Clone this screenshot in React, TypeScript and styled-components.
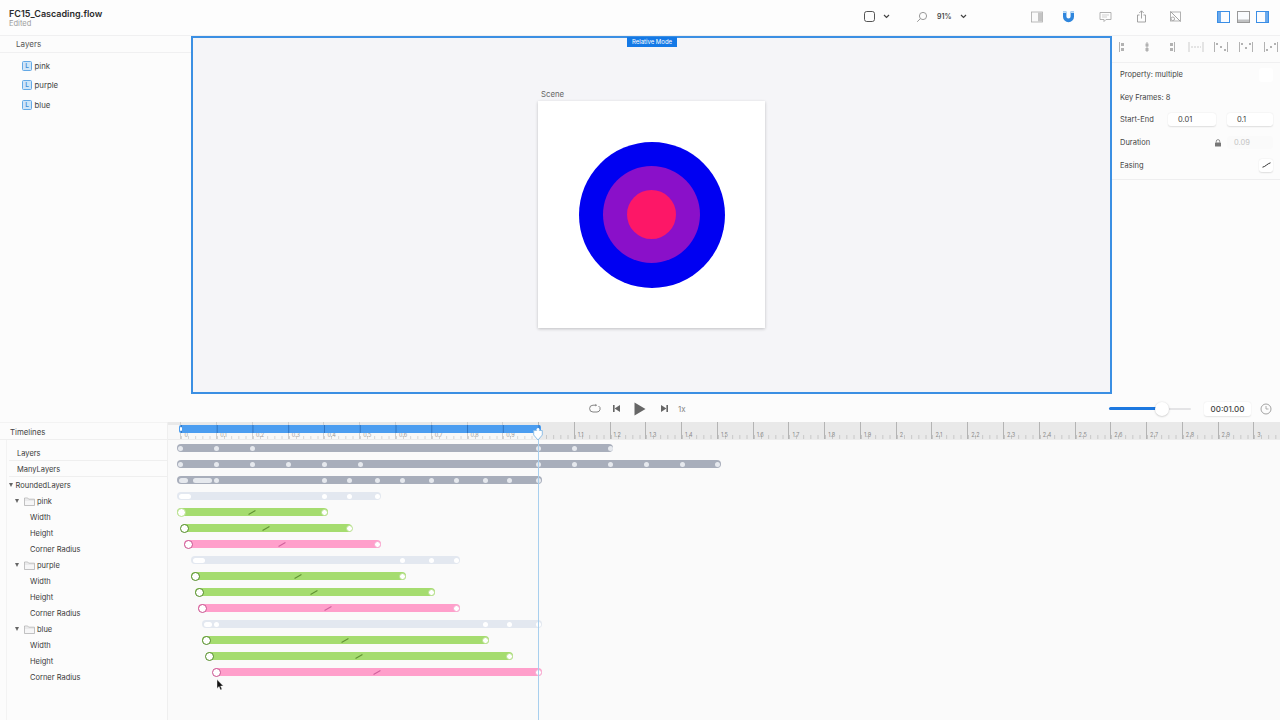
import React from "react";
import styled, { createGlobalStyle } from "styled-components";

const Global = createGlobalStyle`
  html, body { margin: 0; padding: 0; background: #fcfcfc; }
  #root { width: 1280px; height: 720px; overflow: hidden; }
  * { box-sizing: border-box; }
`;

const Root = styled.div`
  width: 1280px; height: 720px; display: flex; flex-direction: column; overflow: hidden;
  background: #fcfcfc; color: #333; font-family: Inter, "Liberation Sans", sans-serif; font-size: 7.5px; position: relative;
`;

/* header */
const Header = styled.header`
  height: 36px; flex: none; display: flex; align-items: center; padding-left: 9px;
  border-bottom: 1px solid #f0f0f1; background: #fdfdfd;
`;
const TitleBlock = styled.div`width: 853px; flex: none; display: flex; flex-direction: column;`;
const Title = styled.div`font-size: 9px; font-weight: 600; color: #2b2b2b; line-height: 11px;`;
const Subtitle = styled.div`font-size: 7.5px; color: #9c9c9c; line-height: 9px;`;
const Tool = styled.div<{ $ml?: number }>`
  width: 14px; height: 14px; flex: none; margin-left: ${p => p.$ml ?? 0}px; margin-bottom: 2px;
  display: flex; align-items: center; justify-content: center;
`;
const ZoomValue = styled.span<{ $ml: number }>`
  width: 15px; margin-left: ${p => p.$ml}px; font-size: 7px; font-weight: 600; color: #444; margin-bottom: 2px;
`;

/* workspace */
const Workspace = styled.div`height: 359px; flex: none; display: flex; align-items: flex-start;`;
const LayersPanel = styled.aside`width: 191px; flex: none; align-self: stretch; background: #fcfcfc;`;
const PanelTitle = styled.div`
  height: 17px; display: flex; align-items: center; padding-left: 16px; color: #555; font-size: 8px; border-bottom: 1px solid #f0f0f1;
`;
const LayerList = styled.div`padding-top: 3px;`;
const LayerRow = styled.div`height: 19.5px; display: flex; align-items: center; gap: 2.5px; padding-left: 22px; color: #444; font-size: 7.8px;`;
const LayerBadge = styled.span`
  width: 10px; height: 10px; border-radius: 1.5px; background: #cfe5f8; border: 1px solid #64a9e6;
  color: #3f8fd8; font-size: 6.5px; font-weight: 600; line-height: 8px; text-align: center;
`;
const Canvas = styled.main`
  width: 921px; height: 358px; flex: none; position: relative; display: flex; align-items: center; justify-content: center;
  background: #f5f5f8; border: 2px solid #3b8fe3;
`;
const ModeBadge = styled.div`
  position: absolute; top: -1px; left: 434px; width: 50px; height: 10px; background: #1479e6; color: #fff;
  font-size: 6px; line-height: 10px; text-align: center;
`;
const Scene = styled.div`
  width: 227px; height: 227px; margin-bottom: 1px; position: relative; background: #fff; box-shadow: 0 1px 3px rgba(0,0,0,.22);
  display: flex; align-items: center; justify-content: center;
`;
const SceneLabel = styled.div`position: absolute; left: 3px; top: -12px; color: #666; line-height: 10px; font-size: 7.8px;`;
const Disc = styled.div<{ $size: number; $color: string }>`
  width: ${p => p.$size}px; height: ${p => p.$size}px; border-radius: 50%; background: ${p => p.$color};
  display: flex; align-items: center; justify-content: center;
`;

/* inspector */
const Inspector = styled.aside`width: 168px; flex: none; align-self: stretch; background: #fcfcfc;`;
const AlignBar = styled.div`
  height: 27px; display: flex; align-items: center; justify-content: space-between; padding: 0 1px 4px 2px;
  border-bottom: 1px solid #f0f0f1;
`;
const AlignSlot = styled.div`width: 16px; height: 14px; display: flex; align-items: center; justify-content: center;`;
const PropGroup = styled.div`padding: .5px 7px 2.5px 8px; border-bottom: 1px solid #eeeeef;`;
const PropRow = styled.div`height: 22.6px; display: flex; align-items: center; color: #444;`;
const PropLabel = styled.span`flex: 1;`;
const Swatch = styled.span`width: 14px; height: 14px; border-radius: 3px; background: #fff;`;
const Field = styled.span<{ $w: number; $ml?: number; $off?: boolean }>`
  width: ${p => p.$w}px; height: 13px; margin-left: ${p => p.$ml ?? 0}px; border-radius: 3px; padding-left: ${p => p.$off ? 7 : 10}px;
  background: ${p => p.$off ? "#fafafa" : "#fff"}; color: ${p => p.$off ? "#c4c4c4" : "#444"}; line-height: 13px;
  box-shadow: ${p => p.$off ? "none" : "0 .5px 1.5px rgba(0,0,0,.12)"};
`;
const LockSlot = styled.span`width: 8px; height: 8px; margin-right: 5px; display: flex;`;
const EaseButton = styled.span`
  width: 14px; height: 13px; border-radius: 3px; background: #fff; display: flex; align-items: center; justify-content: center;
  box-shadow: 0 .5px 1.5px rgba(0,0,0,.12);
`;

/* transport */
const Transport = styled.div`height: 27px; flex: none; display: flex; align-items: center; padding: 0 8px 0 588px; background: #fcfcfc;`;
const Controls = styled.div`display: flex; align-items: center;`;
const CtrlSlot = styled.div<{ $ml?: number }>`
  width: 14px; height: 16px; margin-left: ${p => p.$ml ?? 0}px; display: flex; align-items: center; justify-content: center;
`;
const Speed = styled.span`color: #888; margin-left: 7px; font-size: 8px;`;
const RightGroup = styled.div`margin-left: auto; display: flex; align-items: center;`;
const Slider = styled.div`width: 82px; height: 2px; background: #e4e4e6; position: relative; border-radius: 1px; margin-right: 13px;`;
const SliderFill = styled.div`position: absolute; left: 0; top: -.5px; height: 3px; width: 50px; border-radius: 2px; background: #1d78e0;`;
const SliderKnob = styled.div`
  position: absolute; left: 46px; top: -6px; width: 14px; height: 14px; border-radius: 50%; background: #fff;
  box-shadow: 0 .5px 2px rgba(0,0,0,.25);
`;
const TimeBox = styled.div`
  width: 47px; height: 14px; border-radius: 3px; background: #fff; box-shadow: 0 .5px 1.5px rgba(0,0,0,.1);
  font-size: 8px; font-weight: 500; color: #444; text-align: center; line-height: 14px; margin-right: 9px;
`;

/* timeline */
const Timeline = styled.section`flex: 1; display: flex; position: relative; min-height: 0;`;
const Sidebar = styled.div`width: 168px; flex: none; border-right: 1px solid #efefef; background: #fcfcfc; display: flex; flex-direction: column;`;
const SideHead = styled.div`
  height: 18px; flex: none; border-bottom: 1px solid #efefef; border-top: 1px solid #f3f3f3; padding: 1px 0 0 10px; display: flex; align-items: center; color: #444; font-size: 7.8px;
`;
const SideBody = styled.div`flex: 1; margin-left: 6px; border-left: 1px solid #f3f3f3; padding-top: 5px;`;
const SideRow = styled.div<{ $indent: number; $line?: boolean }>`
  height: 16px; display: flex; align-items: center; padding-left: ${p => p.$indent}px; color: #3a3a3a;
  padding-top: ${p => p.$line ? 1 : 0}px;
  border-bottom: ${p => p.$line ? "1px solid #efefef" : "none"}; margin-left: ${p => p.$line ? 2 : 0}px;
`;
const Caret = styled.span<{ $ml: number }>`
  width: 0; height: 0; margin-left: ${p => p.$ml}px; border-left: 2.5px solid transparent; border-right: 2.5px solid transparent;
  border-top: 4px solid #666; margin-right: 2.5px;
`;
const FolderSlot = styled.span`width: 11px; height: 9px; display: flex; margin: 0 2px 0 2.5px;`;
const Tracks = styled.div`flex: 1; min-width: 0; background: #fafafa; display: flex; flex-direction: column; position: relative; overflow: hidden;`;
const Ruler = styled.div`height: 18px; flex: none; display: flex; position: relative; background: #e9e9e9; overflow: hidden; border-bottom: 1px solid #ececec;`;
const RulerLead = styled.div`width: 12.4px; flex: none; background: linear-gradient(#e9e9e9 3px, #f8f8f8 3px);`;
const RulerCell = styled.div<{ $past: boolean }>`
  width: 35.78px; flex: none; height: 100%; padding: 10px 0 0 3px; font-size: 5.5px; line-height: 7px;
  color: ${p => p.$past ? "#9a9a9a" : "#8a8a8a"};
  border-left: .6px solid ${p => p.$past ? "#cfcfcf" : "#b4b4b4"};
  background: ${p => p.$past
    ? "linear-gradient(to right, #d2d2d2 .6px, transparent .6px) left bottom / 7.156px 3.5px repeat-x, linear-gradient(#e9e9e9 3px, #f8f8f8 3px)"
    : "linear-gradient(to right, #c4c4c4 .6px, transparent .6px) left bottom / 7.156px 4px repeat-x, #e9e9e9"};
`;
const WorkArea = styled.div`
  position: absolute; left: 10.5px; top: 3px; width: 362px; height: 7.5px; border-radius: 2px; overflow: hidden; background: #4b9df0;
`;
const WorkTicks = styled.div`
  position: absolute; inset: 0; 
  background: linear-gradient(to right, #2f74c2 .7px, transparent .7px) 37.68px 0 / 35.78px 100% repeat-x;
`;
const WorkHandle = styled.div`position: absolute; left: 1.5px; top: 1.5px; width: 2px; height: 4.5px; border-radius: 1px; background: #fff;`;
const TrackList = styled.div`flex: 1;`;
const TrackRow = styled.div`height: 16px; display: flex; align-items: center;`;
const Bar = styled.div<{ $left: number; $w: number; $color: string }>`
  height: 8px; border-radius: 4px; position: relative; flex: none;
  margin-left: ${p => p.$left}px; width: ${p => p.$w}px; background: ${p => p.$color};
`;
const Dot = styled.span<{ $x: number; $color: string }>`
  position: absolute; top: 1.5px; left: ${p => p.$x - 2.5}px; width: 5px; height: 5px; border-radius: 50%; background: ${p => p.$color};
`;
const Blob = styled.span<{ $x: number; $w: number; $color: string }>`
  position: absolute; top: 1.5px; left: ${p => p.$x}px; width: ${p => p.$w}px; height: 5px; border-radius: 2.5px; background: ${p => p.$color};
`;
const Ring = styled.span<{ $x: number; $border: string }>`
  position: absolute; top: -.5px; left: ${p => p.$x - 4.5}px; width: 9px; height: 9px; border-radius: 50%; background: #fff;
  border: 1.5px solid ${p => p.$border};
`;
const EndDot = styled.span<{ $x: number; $border: string }>`
  position: absolute; top: .5px; left: ${p => p.$x - 3.5}px; width: 7px; height: 7px; border-radius: 50%; background: #fff;
  border: 1px solid ${p => p.$border};
`;
const Ease = styled.span<{ $x: number; $color: string }>`
  position: absolute; top: 3.5px; left: ${p => p.$x - 4}px; width: 8px; height: 1px; background: ${p => p.$color}; transform: rotate(-30deg);
`;
const PlayLine = styled.div`position: absolute; left: 369.5px; top: 6px; bottom: 0; width: 1px; background: #a8cfee;`;
const PlayHead = styled.svg`position: absolute; left: 365px; top: 5px; width: 10px; height: 14px;`;
const Pointer = styled.svg`position: absolute; left: 47.5px; top: 257px; width: 8px; height: 12px;`;

/* icons */
const ChevronDown = () => <svg width="7" height="5" viewBox="0 0 7 5"><path d="M1 1l2.500 2.500L6 1" fill="none" stroke="#444" strokeWidth="1.200" /></svg>;
const ShapeIcon = () => <svg width="13" height="13" viewBox="0 0 13 13"><rect x="1.500" y="1.500" width="10" height="10" rx="2.200" fill="none" stroke="#555" strokeWidth="1" /></svg>;
const SearchIcon = () => <svg width="12" height="12" viewBox="0 0 12 12"><circle cx="7" cy="5" r="3.600" fill="none" stroke="#999" /><path d="M4.300 7.700L1.200 10.800" stroke="#999" /></svg>;
const SidePanelIcon = () => <svg width="12" height="12" viewBox="0 0 12 12"><rect x=".5" y="1" width="11" height="10" fill="#fafafa" stroke="#aaa" strokeWidth=".8" /><rect x="7" y="1.500" width="4" height="9" fill="#c4c4c4" /></svg>;
const MagnetIcon = () => <svg width="13" height="13" viewBox="0 0 13 13"><path d="M1 1.500h3.400v5a2.100 2.100 0 0 0 4.200 0v-5H12v5.200a5.500 5.500 0 0 1-11 0z" fill="#2f86dd" /><path d="M1 1.500h3.400v1.600H1zM8.600 1.500H12v1.600H8.600z" fill="#bcdcf7" /></svg>;
const CommentIcon = () => <svg width="13" height="12" viewBox="0 0 13 12"><path d="M1 1.500h11v7H7L5 10.500V8.500H1z" fill="none" stroke="#aaa" strokeWidth=".9" /><path d="M3 4h7M3 6h5" stroke="#bbb" strokeWidth=".7" /></svg>;
const ShareIcon = () => <svg width="11" height="13" viewBox="0 0 11 13"><path d="M3.500 5H1.500v7h8V5h-2" fill="none" stroke="#999" strokeWidth=".9" /><path d="M5.500 8.500V1M3.300 3l2.200-2.200L7.700 3" fill="none" stroke="#999" strokeWidth=".9" /></svg>;
const NoDeviceIcon = () => <svg width="13" height="13" viewBox="0 0 13 13"><rect x="1.500" y="2" width="10" height="9" fill="none" stroke="#aaa" strokeWidth=".9" /><path d="M1.500 1.500l10 10" stroke="#999" strokeWidth=".9" /><circle cx="3.800" cy="8.800" r="1.800" fill="#fafafa" stroke="#999" strokeWidth=".8" /></svg>;
const LayoutIcon = ({ band, color }: { band: "left" | "bottom" | "right"; color: string }) => (
  <svg width="13" height="12" viewBox="0 0 13 12">
    <rect x=".5" y=".5" width="12" height="11" fill="#fafcff" stroke={color} strokeWidth="1" />
    {band === "left" && <rect x="1" y="1" width="3" height="10" fill={color} opacity=".75" />}
    {band === "right" && <rect x="9" y="1" width="3" height="10" fill={color} opacity=".75" />}
    {band === "bottom" && <rect x="1" y="8.500" width="11" height="2.500" fill={color} opacity=".6" />}
  </svg>
);
const AlignIcon = ({ kind }: { kind: number }) => {
  const c = "#b2b2b2";
  if (kind === 0) return <svg width="10" height="12" viewBox="0 0 10 12"><path d="M2.500 1v10" stroke={c} /><rect x="4" y="2" width="3" height="3" fill={c} /><rect x="4" y="7" width="3" height="3" fill={c} /></svg>;
  if (kind === 1) return <svg width="10" height="12" viewBox="0 0 10 12"><path d="M5 1v10" stroke={c} /><rect x="3.500" y="2.500" width="3" height="3" fill={c} /><rect x="3.500" y="7" width="3" height="3" fill={c} /></svg>;
  if (kind === 2) return <svg width="10" height="12" viewBox="0 0 10 12"><path d="M7.500 1v10" stroke={c} /><rect x="3" y="2" width="3" height="3" fill={c} /><rect x="3" y="7" width="3" height="3" fill={c} /></svg>;
  if (kind === 3) return <svg width="16" height="12" viewBox="0 0 16 12"><path d="M1 1v10M15 1v10" stroke="#ccc" /><path d="M3 6h10" stroke="#ccc" strokeDasharray="2 1" /></svg>;
  const pts = kind === 4 ? [[4, 3], [8, 6], [12, 9]] : kind === 5 ? [[4, 3], [8, 7], [12, 3]] : [[4, 9], [8, 6], [12, 3]];
  return (
    <svg width="16" height="12" viewBox="0 0 16 12">
      <path d="M1.500 1v10M14.500 1v10" stroke={c} />
      {pts.map(([x, y], i) => <rect key={i} x={x - 1} y={y - 1} width="2" height="2" fill={c} />)}
    </svg>
  );
};
const LockIcon = () => <svg width="8" height="8" viewBox="0 0 8 8"><rect x="1" y="3.500" width="6" height="4" rx=".6" fill="#777" /><path d="M2.300 3.500V2.300a1.700 1.700 0 0 1 3.400 0v1.200" fill="none" stroke="#777" strokeWidth=".8" /></svg>;
const EaseIcon = () => <svg width="9" height="6" viewBox="0 0 9 6"><path d="M.5 5.200C3 5 5.500 1.500 8.500.8" fill="none" stroke="#333" strokeWidth="1" /></svg>;
const LoopIcon = () => <svg width="12" height="11" viewBox="0 0 12 11"><path d="M7 2.200H4a3.200 3.200 0 0 0 0 6.800h4a3.200 3.200 0 0 0 1.500-6" fill="none" stroke="#777" strokeWidth=".9" /><path d="M6.500 .8L8 2.200 6.500 3.500" fill="#777" /></svg>;
const PrevIcon = () => <svg width="9" height="9" viewBox="0 0 9 9"><rect x="1" y="1" width="1.600" height="7" fill="#666" /><path d="M8 1v7L2.600 4.500z" fill="#666" /></svg>;
const NextIcon = () => <svg width="9" height="9" viewBox="0 0 9 9"><rect x="6.400" y="1" width="1.600" height="7" fill="#666" /><path d="M1 1v7l5.400-3.500z" fill="#666" /></svg>;
const PlayIcon = () => <svg width="12" height="14" viewBox="0 0 12 14"><path d="M.5.500v13L11.500 7z" fill="#666" /></svg>;
const ClockIcon = () => <svg width="12" height="12" viewBox="0 0 12 12"><circle cx="6" cy="6" r="5" fill="none" stroke="#999" strokeWidth=".9" /><path d="M6 3v3h2.500" fill="none" stroke="#999" strokeWidth=".8" /></svg>;
const FolderIcon = () => <svg width="11" height="9" viewBox="0 0 11 9"><path d="M.5 1h3.200l1 1.200h5.800v6.300H.5z" fill="#f6f6f7" stroke="#a9a9a9" strokeWidth=".7" /><path d="M.5 3h10" stroke="#c4c4c4" strokeWidth=".5" /></svg>;

/* data */
const GRAY = "#a8aebb", LIGHT = "#e3e8f0", GREEN = "#a5dc6f", PINK = "#ff9fcb";
const DOT = "#e6e9ee";
type Track = {
  from: number; to: number; color: string;
  dots?: number[]; blobs?: [number, number][]; dotColor?: string;
  start?: number; end?: number; ease?: number; plain?: boolean;
};
const tracks: Track[] = [
  { from: 177, to: 613, color: GRAY, dots: [180.5, 216, 252, 538, 574, 610] },
  { from: 177, to: 721, color: GRAY, dots: [180.5, 216, 252, 288, 324, 360, 538, 574, 610, 646, 682, 717.5] },
  { from: 177, to: 542, color: GRAY, blobs: [[179, 9], [193, 19]], dots: [216, 324, 349, 377, 402, 431, 456, 485, 509, 538] },
  { from: 177, to: 381, color: LIGHT, dotColor: "#fff", blobs: [[179, 12]], dots: [324, 349, 377] },
  { from: 177, to: 328, color: GREEN, start: 181, end: 324, ease: 252, plain: true },
  { from: 180.5, to: 352, color: GREEN, start: 184.5, end: 349, ease: 266 },
  { from: 184, to: 381, color: PINK, start: 188, end: 377, ease: 282 },
  { from: 191, to: 460, color: LIGHT, dotColor: "#fff", blobs: [[193, 12]], dots: [402, 431, 456] },
  { from: 191, to: 406, color: GREEN, start: 195, end: 402, ease: 298 },
  { from: 195, to: 435, color: GREEN, start: 199, end: 431, ease: 314 },
  { from: 198, to: 460, color: PINK, start: 202, end: 456, ease: 328 },
  { from: 202, to: 542, color: LIGHT, dotColor: "#fff", blobs: [[204, 8]], dots: [216, 485, 509, 538] },
  { from: 202, to: 489, color: GREEN, start: 206, end: 485, ease: 345 },
  { from: 205.5, to: 513, color: GREEN, start: 209.5, end: 509, ease: 359 },
  { from: 212.5, to: 542, color: PINK, start: 216.5, end: 538, ease: 377 },
];
const rulerLabels = Array.from({ length: 31 }, (_, i) => {
  if (i === 0) return "0";
  if (i === 10) return "";
  return i % 10 === 0 ? String(i / 10) : (i / 10).toFixed(1);
});
const aligns = [0, 1, 2, 3, 4, 5, 6];
const ORIGIN = 168;

const TrackBar = ({ t }: { t: Track }) => {
  const isPink = t.color === PINK;
  const ring = isPink ? "#c94f8e" : "#4f8a22";
  const soft = isPink ? "#f5a9cf" : "#b7e08c";
  const mark = isPink ? "#d0609c" : "#5f9132";
  return (
    <TrackRow>
      <Bar $left={t.from - ORIGIN} $w={t.to - t.from} $color={t.color}>
        {t.blobs?.map(([x, w]) => <Blob key={x} $x={x - t.from} $w={w} $color={t.dotColor ?? DOT} />)}
        {t.dots?.map(x => <Dot key={x} $x={x - t.from} $color={t.dotColor ?? DOT} />)}
        {t.start !== undefined && <Ring $x={t.start - t.from} $border={t.plain ? soft : ring} />}
        {t.end !== undefined && <EndDot $x={t.end - t.from} $border={soft} />}
        {t.ease !== undefined && <Ease $x={t.ease - t.from} $color={mark} />}
      </Bar>
    </TrackRow>
  );
};

const LayerGroup = ({ name }: { name: string }) => (
  <>
    <SideRow $indent={0}><Caret $ml={8} /><FolderSlot><FolderIcon /></FolderSlot>{name}</SideRow>
    <SideRow $indent={23}>Width</SideRow>
    <SideRow $indent={23}>Height</SideRow>
    <SideRow $indent={23}>Corner Radius</SideRow>
  </>
);

export default function App() {
  return (
    <Root>
      <Global />
      <Header>
        <TitleBlock>
          <Title>FC15_Cascading.flow</Title>
          <Subtitle>Edited</Subtitle>
        </TitleBlock>
        <Tool><ShapeIcon /></Tool>
        <Tool $ml={3}><ChevronDown /></Tool>
        <Tool $ml={22}><SearchIcon /></Tool>
        <ZoomValue $ml={8}>91%</ZoomValue>
        <Tool $ml={4}><ChevronDown /></Tool>
        <Tool $ml={60}><SidePanelIcon /></Tool>
        <Tool $ml={17}><MagnetIcon /></Tool>
        <Tool $ml={23}><CommentIcon /></Tool>
        <Tool $ml={22}><ShareIcon /></Tool>
        <Tool $ml={20}><NoDeviceIcon /></Tool>
        <Tool $ml={34}><LayoutIcon band="left" color="#3a8ee6" /></Tool>
        <Tool $ml={6}><LayoutIcon band="bottom" color="#999" /></Tool>
        <Tool $ml={5}><LayoutIcon band="right" color="#3a8ee6" /></Tool>
      </Header>

      <Workspace>
        <LayersPanel>
          <PanelTitle>Layers</PanelTitle>
          <LayerList>
            {["pink", "purple", "blue"].map(n => (
              <LayerRow key={n}><LayerBadge>L</LayerBadge>{n}</LayerRow>
            ))}
          </LayerList>
        </LayersPanel>
        <Canvas>
          <ModeBadge>Relative Mode</ModeBadge>
          <Scene>
            <SceneLabel>Scene</SceneLabel>
            <Disc $size={146} $color="#0000f2">
              <Disc $size={97} $color="#8a10c9">
                <Disc $size={49} $color="#fd1767" />
              </Disc>
            </Disc>
          </Scene>
        </Canvas>
        <Inspector>
          <AlignBar>
            {aligns.map(k => <AlignSlot key={k}><AlignIcon kind={k} /></AlignSlot>)}
          </AlignBar>
          <PropGroup>
            <PropRow><PropLabel>Property: multiple</PropLabel><Swatch /></PropRow>
            <PropRow><PropLabel>Key Frames: 8</PropLabel></PropRow>
            <PropRow><PropLabel>Start-End</PropLabel><Field $w={48}>0.01</Field><Field $w={46} $ml={11}>0.1</Field></PropRow>
            <PropRow><PropLabel>Duration</PropLabel><LockSlot><LockIcon /></LockSlot><Field $w={46} $off>0.09</Field></PropRow>
            <PropRow><PropLabel>Easing</PropLabel><EaseButton><EaseIcon /></EaseButton></PropRow>
          </PropGroup>
        </Inspector>
      </Workspace>

      <Transport>
        <Controls>
          <CtrlSlot><LoopIcon /></CtrlSlot>
          <CtrlSlot $ml={7}><PrevIcon /></CtrlSlot>
          <CtrlSlot $ml={10}><PlayIcon /></CtrlSlot>
          <CtrlSlot $ml={10}><NextIcon /></CtrlSlot>
          <Speed>1x</Speed>
        </Controls>
        <RightGroup>
          <Slider>
            <SliderFill />
            <SliderKnob />
          </Slider>
          <TimeBox>00:01.00</TimeBox>
          <ClockIcon />
        </RightGroup>
      </Transport>

      <Timeline>
        <Sidebar>
          <SideHead>Timelines</SideHead>
          <SideBody>
            <SideRow $indent={8} $line>Layers</SideRow>
            <SideRow $indent={8} $line>ManyLayers</SideRow>
            <SideRow $indent={0}><Caret $ml={2} />RoundedLayers</SideRow>
            <LayerGroup name="pink" />
            <LayerGroup name="purple" />
            <LayerGroup name="blue" />
          </SideBody>
        </Sidebar>
        <Tracks>
          <Ruler>
            <RulerLead />
            {rulerLabels.map((l, i) => <RulerCell key={i} $past={i < 10}>{l}</RulerCell>)}
            <WorkArea>
              <WorkTicks />
              <WorkHandle />
            </WorkArea>
          </Ruler>
          <TrackList>
            {tracks.map((t, i) => <TrackBar key={i} t={t} />)}
          </TrackList>
          <PlayLine />
          <PlayHead viewBox="0 0 10 14">
            <path d="M.7 3.500h8.600v4.500L5 13 .7 8z" fill="#fff" stroke="#8fbfe6" strokeWidth="1" />
            <circle cx="5" cy="2.500" r="1.500" fill="#fff" />
          </PlayHead>
          <Pointer viewBox="0 0 8 12">
            <path d="M1 .5v9l2-2 1.500 3.500 1.500-.7L4.600 7H7.300z" fill="#111" stroke="#fff" strokeWidth=".4" />
          </Pointer>
        </Tracks>
      </Timeline>
    </Root>
  );
}
